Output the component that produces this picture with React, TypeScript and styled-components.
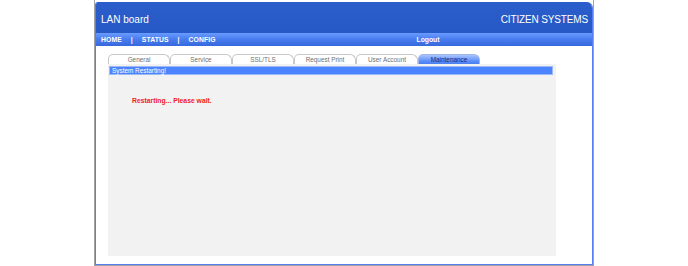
import React from "react";
import styled, { createGlobalStyle } from "styled-components";

const GlobalStyle = createGlobalStyle`
  html, body {
    margin: 0;
    padding: 0;
    background: #ffffff;
    font-family: "Liberation Sans", Arial, sans-serif;
  }
`;

const Frame = styled.div`
  box-sizing: border-box;
  width: 500px;
  height: 266px;
  margin: 0 auto;
  padding-top: 2px;
  border: 1px solid #a4a4a4;
  border-top: none;
`;

const Inner = styled.div`
  box-sizing: border-box;
  height: 100%;
  display: flex;
  flex-direction: column;
  background: #ffffff;
  border: 1px solid #5a7cf2;
  border-top: none;
  border-radius: 3px 6px 0 0;
  overflow: hidden;
`;

const Header = styled.header`
  height: 31px;
  flex: none;
  display: flex;
  align-items: center;
  justify-content: space-between;
  padding: 0 4px 0 5px;
  background: linear-gradient(#2b5dcb, #2658c6);
  color: #ffffff;
`;

const Title = styled.span<{ $tight?: boolean }>`
  font-size: 10px;
  letter-spacing: ${({ $tight }) => ($tight ? "-0.15px" : "0")};
  padding-top: 4px;
`;

const Nav = styled.nav`
  height: 13px;
  flex: none;
  display: grid;
  grid-template-columns: 264px 126px 1fr;
  align-items: center;
  padding-left: 5px;
  background: linear-gradient(#6a9cff 0%, #4a7ef0 45%, #3568dc 100%);
  color: #ffffff;
  font-size: 6.8px;
  font-weight: bold;
`;

const NavLinks = styled.div`
  display: flex;
  gap: 9px;
`;

const NavItem = styled.span`
  letter-spacing: 0.1px;
`;

const Logout = styled.span`
  text-align: center;
`;

const Content = styled.main`
  flex: 1;
  padding: 8px 0 0 12px;
`;

const Tabs = styled.div`
  display: flex;
  height: 10px;
`;

const Tab = styled.div<{ $active?: boolean }>`
  box-sizing: border-box;
  width: 62px;
  height: 10px;
  display: flex;
  align-items: center;
  justify-content: center;
  font-size: 6.4px;
  color: ${({ $active }) => ($active ? "#1a2a80" : "#707070")};
  background: ${({ $active }) =>
    $active ? "linear-gradient(#a8c4ff, #5a8cf8 70%, #4b7ff2)" : "#ffffff"};
  border: 1px solid ${({ $active }) => ($active ? "#9fb6e8" : "#c8c8c8")};
  border-bottom: none;
  border-radius: 5px 6px 0 0;
`;

const Panel = styled.section`
  box-sizing: border-box;
  width: 448px;
  height: 192px;
  padding: 2px 3px 0 1px;
  background: #f2f2f2;
`;

const TitleBar = styled.div`
  box-sizing: border-box;
  height: 9px;
  display: flex;
  align-items: center;
  padding-left: 2px;
  background: #4b84fe;
  border: 1px solid #9cb9f6;
  color: #ffffff;
  font-size: 6.4px;
`;

const Message = styled.p`
  margin: 22px 0 0 23px;
  color: #ee1c24;
  font-size: 6.8px;
  font-weight: bold;
`;

const tabs = ["General", "Service", "SSL/TLS", "Request Print", "User Account", "Maintenance"];

export default function App() {
  return (
    <>
      <GlobalStyle />
      <Frame>
        <Inner>
          <Header>
            <Title>LAN board</Title>
            <Title $tight>CITIZEN SYSTEMS</Title>
          </Header>
          <Nav>
            <NavLinks>
              <NavItem>HOME</NavItem>
              <NavItem>|</NavItem>
              <NavItem>STATUS</NavItem>
              <NavItem>|</NavItem>
              <NavItem>CONFIG</NavItem>
            </NavLinks>
            <Logout>Logout</Logout>
          </Nav>
          <Content>
            <Tabs>
              {tabs.map((t) => (
                <Tab key={t} $active={t === "Maintenance"}>
                  {t}
                </Tab>
              ))}
            </Tabs>
            <Panel>
              <TitleBar>System Restarting!</TitleBar>
              <Message>Restarting... Please wait.</Message>
            </Panel>
          </Content>
        </Inner>
      </Frame>
    </>
  );
}
